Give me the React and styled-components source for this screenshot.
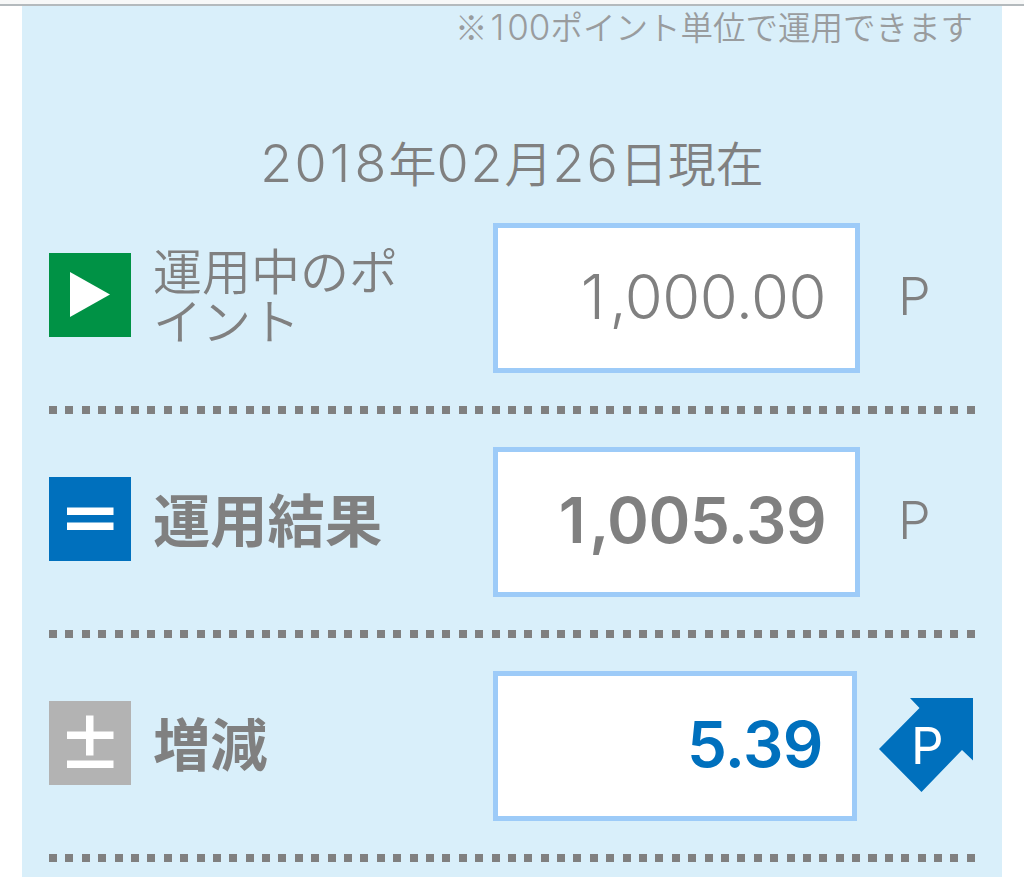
import React from 'react';
import styled, { createGlobalStyle } from 'styled-components';

const colors = {
  panel: '#d9effa',
  text: '#808080',
  note: '#999c9e',
  border: '#9dcbf8',
  blue: '#0070bd',
  green: '#009245',
  gray: '#b3b3b3'
};

const GlobalStyle = createGlobalStyle`
  * {
    box-sizing: border-box;
  }
  body {
    margin: 0;
    background: #fff;
    color: ${colors.text};
    font-family: Inter, 'Noto Sans CJK JP', sans-serif;
    font-weight: 350;
    overflow: hidden;
  }
`;

const Page = styled.div`
  width: 1024px;
  height: 878px;
  overflow: hidden;
`;

const TopBar = styled.div`
  height: 6px;
  background: #f7f8f8;
  border-bottom: 2px solid #b4babd;
`;

const Panel = styled.main`
  width: 980px;
  height: 871px;
  margin: 0 22px;
  padding: 0 27px;
  background: ${colors.panel};
`;

const Note = styled.p`
  margin: 0 2px 0 0;
  height: 44px;
  line-height: 39px;
  font-family: 'Noto Sans CJK JP', sans-serif;
  font-size: 32.5px;
  text-align: right;
  color: ${colors.note};
  white-space: nowrap;
`;

const DateTitle = styled.h1`
  margin: 74px 0 0;
  height: 80px;
  line-height: 79px;
  font-size: 48px;
  font-weight: 350;
  text-align: center;
  white-space: nowrap;
`;

const Digits = styled.span`
  font-family: Inter, sans-serif;
  font-size: ${props => props.$size}px;
  letter-spacing: ${props => props.$spacing || 0}px;
  font-weight: 350;
`;

const One = styled.span`
  margin: 0 ${props => props.$after || 0}px 0 ${props => props.$before || 0}px;
`;

const RowWrapper = styled.section`
  display: flex;
  flex-direction: column;
  height: 224px;
`;

const RowBody = styled.div`
  display: flex;
  align-items: flex-start;
  height: 202px;
  padding-top: 19px;
`;

const Divider = styled.div`
  width: 926px;
  height: 8px;
  background: repeating-linear-gradient(
    to right,
    ${colors.text} 0 8px,
    transparent 8px 16.39px
  );
`;

const Icon = styled.svg`
  width: 82px;
  height: 84px;
  margin-top: 30px;
  flex: none;
  background: ${props => props.$bg};
`;

const Label = styled.div`
  width: 260px;
  margin: ${props => (props.$strong ? 32 : 25)}px 80px 0 22px;
  flex: none;
  font-size: ${props => (props.$strong ? 57.3 : 49)}px;
  line-height: ${props => (props.$strong ? 84 : 50)}px;
  font-weight: ${props => (props.$strong ? 700 : 350)};
`;

const ValueBox = styled.div`
  width: ${props => props.$width || 367}px;
  height: 150px;
  flex: none;
  padding-right: 29px;
  border: 5px solid ${colors.border};
  background: #fff;
  line-height: ${props => (props.$strong ? 136 : 137)}px;
  font-size: ${props => (props.$strong ? 63.5 : 61.5)}px;
  font-weight: ${props => (props.$strong ? 600 : 350)};
  letter-spacing: -0.5px;
  color: ${props => props.$color || colors.text};
  text-align: right;
`;

const Unit = styled.div`
  flex: none;
  padding-left: 38px;
  line-height: 147px;
  font-size: 52px;
  font-weight: 350;
`;

const ArrowIcon = styled.svg`
  width: 94px;
  height: 94px;
  margin: 27px 0 0 22px;
  flex: none;
`;

const PlayIcon = () => (
  <Icon viewBox="0 0 82 84" $bg={colors.green}>
    <path d="M21 19 61 41.5 21 64Z" fill="#fff" />
  </Icon>
);

const EqualIcon = () => (
  <Icon viewBox="0 0 82 84" $bg={colors.blue}>
    <path d="M18 30.5h46.5v7.5H18zM18 45.5h46.5v7.5H18z" fill="#fff" />
  </Icon>
);

const PlusMinusIcon = () => (
  <Icon viewBox="0 0 82 84" $bg={colors.gray}>
    <path
      d="M18 30.5h19V14.5h7.5v16h20V38h-20v16.5H37V38H18zM18 59.5h46.5V67H18z"
      fill="#fff"
    />
  </Icon>
);

const PointUpIcon = () => (
  <ArrowIcon viewBox="0 0 94 94">
    <path d="M31 0H94V62.5L83 52 42.5 94 0 51 40.5 10Z" fill={colors.blue} />
    <text x="32" y="66" fontSize="51" fontWeight="400" fill="#fff">
      P
    </text>
  </ArrowIcon>
);

const PointRow = ({ icon, label, strong, value, unit, ...box }) => (
  <RowWrapper>
    <RowBody>
      {icon}
      <Label $strong={strong}>{label}</Label>
      <ValueBox $strong={strong} {...box}>
        {value}
      </ValueBox>
      {unit}
    </RowBody>
    <Divider />
  </RowWrapper>
);

const App = () => (
  <>
    <GlobalStyle />
    <Page>
      <TopBar />
      <Panel>
        <Note>
          ※
          <Digits $size={35}>
            <One $before={3} $after={3}>
              1
            </One>
            00
          </Digits>
          ポイント単位で運用できます
        </Note>
        <DateTitle>
          <Digits $size={52} $spacing={2.2}>
            20
            <One $before={1} $after={2}>
              1
            </One>
            8
          </Digits>
          年
          <Digits $size={52} $spacing={2}>
            02
          </Digits>
          月
          <Digits $size={52} $spacing={2}>
            26
          </Digits>
          日現在
        </DateTitle>
        <PointRow
          icon={<PlayIcon />}
          label="運用中のポイント"
          value={
            <>
              <One $after={5}>1</One>,000.00
            </>
          }
          unit={<Unit>P</Unit>}
        />
        <PointRow
          icon={<EqualIcon />}
          label="運用結果"
          strong
          value={
            <>
              <One $after={4}>1</One>,005.39
            </>
          }
          unit={<Unit>P</Unit>}
        />
        <PointRow
          icon={<PlusMinusIcon />}
          label="増減"
          strong
          value="5.39"
          $width={364}
          $color={colors.blue}
          unit={<PointUpIcon />}
        />
      </Panel>
    </Page>
  </>
);

export default App;
